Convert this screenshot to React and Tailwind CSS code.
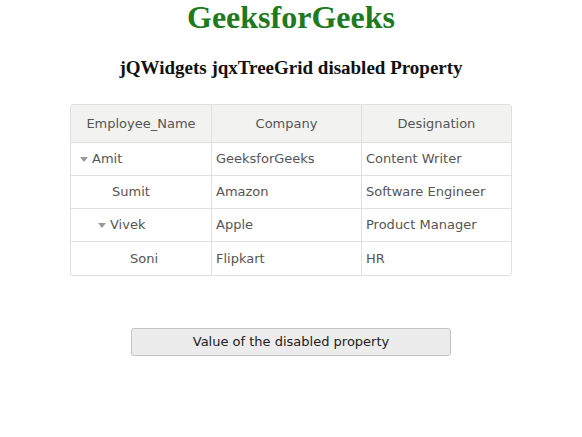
import React from "react";

const rows = [
  { name: "Amit", level: 0, parent: true, company: "GeeksforGeeks", role: "Content Writer" },
  { name: "Sumit", level: 1, parent: false, company: "Amazon", role: "Software Engineer" },
  { name: "Vivek", level: 1, parent: true, company: "Apple", role: "Product Manager" },
  { name: "Soni", level: 2, parent: false, company: "Flipkart", role: "HR" },
];

const Arrow = () => (
  <svg width="8" height="5" viewBox="0 0 8 5" className="mr-[4px]">
    <path d="M0 0 H8 L4 5 Z" fill="#999" />
  </svg>
);

const App = () => {
  return (
    <main className="w-[582px] h-[437px] bg-white flex flex-col items-center">
      <h1 className="text-[32px] leading-[34px] font-bold text-[#1f7a1f] mt-0" style={{ fontFamily: '"Liberation Serif", serif' }}>
        GeeksforGeeks
      </h1>
      <h3 className="text-[19px] leading-[19px] font-bold text-[#111] mt-[24px]" style={{ fontFamily: '"Liberation Serif", serif' }}>
        jQWidgets jqxTreeGrid disabled Property
      </h3>

      <div
        className="mt-[27px] w-[442px] border border-[#e0e0e0] rounded-[3px] overflow-hidden text-[13px] text-[#555]"
        style={{ fontFamily: '"DejaVu Sans", Verdana, sans-serif' }}
      >
        <div className="grid grid-cols-[141px_150px_1fr] h-[38px] bg-[#f2f2f0] border-b border-[#e0e0e0]">
          <div className="flex items-center justify-center border-r border-[#e0e0e0]">Employee_Name</div>
          <div className="flex items-center justify-center border-r border-[#e0e0e0]">Company</div>
          <div className="flex items-center justify-center">Designation</div>
        </div>
        {rows.map((r, i) => (
          <div key={r.name} className={`grid grid-cols-[141px_150px_1fr] h-[33px] ${i < rows.length - 1 ? "border-b border-[#e0e0e0]" : ""}`}>
            <div className="flex items-center border-r border-[#e0e0e0] pl-[9px]">
              <span className="flex items-center" style={{ marginLeft: r.level * 18 + (r.parent ? 0 : 14) }}>
                {r.parent && <Arrow />}
                {r.name}
              </span>
            </div>
            <div className="flex items-center border-r border-[#e0e0e0] pl-[4px]">{r.company}</div>
            <div className="flex items-center pl-[4px]">{r.role}</div>
          </div>
        ))}
      </div>

      <button
        className="mt-[52px] w-[320px] h-[28px] bg-[#ececec] border border-[#c4c4c4] rounded-[3px] text-[13px] text-[#222]"
        style={{ fontFamily: '"DejaVu Sans", Verdana, sans-serif' }}
      >
        Value of the disabled property
      </button>
    </main>
  );
};

export default App;
